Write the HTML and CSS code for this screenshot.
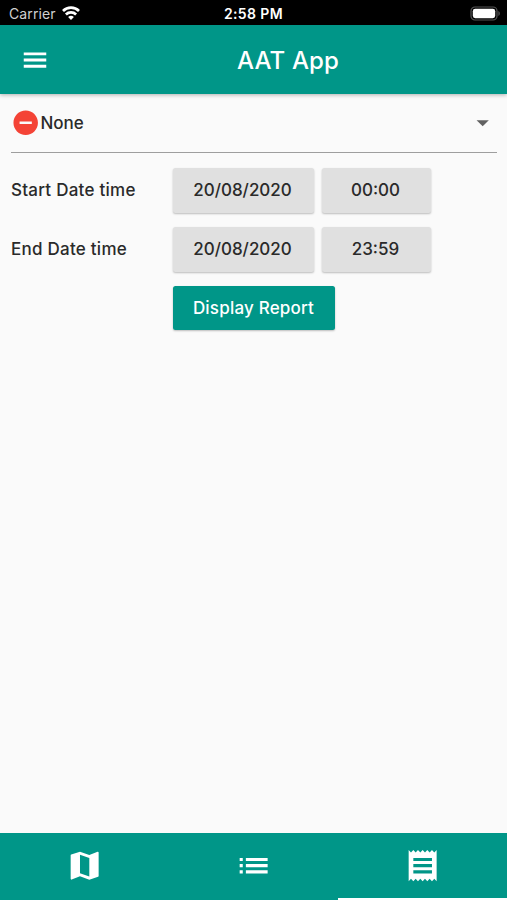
FILE: index.html
```
<!DOCTYPE html>
<html lang="en">
<head>
<meta charset="UTF-8">
<meta name="viewport" content="width=device-width, initial-scale=1.0">
<title>AAT App</title>
<link rel="stylesheet" href="styles.css">
</head>
<body>

<div class="status-bar">
  <div class="carrier">
    <span class="carrier-name">Carrier</span>
    <svg class="wifi" viewBox="0 0 18 14" fill="none" stroke="#fff" stroke-width="2.7">
      <path d="M1 5a11.4 11.4 0 0 1 16 0"/>
      <path d="M3.9 8.5a7.3 7.3 0 0 1 10.2 0"/>
      <path d="M9 14 6.1 11.1a4.1 4.1 0 0 1 5.8 0z" fill="#fff" stroke="none"/>
    </svg>
  </div>
  <div class="clock">2:58 PM</div>
  <svg class="battery" viewBox="0 0 31 15">
    <rect x="1" y="1" width="26" height="13" rx="4" fill="none" stroke="#555" stroke-width="1.2"/>
    <rect x="2.8" y="2.8" width="22.4" height="9.4" rx="2.4" fill="#fff"/>
    <path d="M28.4 5v5c1.9-.7 1.9-4.3 0-5z" fill="#555"/>
  </svg>
</div>

<div class="app-bar">
  <svg class="menu-icon" viewBox="0 0 24 24"><path d="M3 18.1h18v-2.3H3v2.3zm0-5h18v-2.3H3v2.3zm0-7.2v2.3h18V5.9H3z"/></svg>
  <h1 class="title">AAT App</h1>
</div>

<div class="content">
  <div class="dropdown">
    <svg class="none-icon" viewBox="0 0 24 24"><path d="M12 2C6.48 2 2 6.48 2 12s4.48 10 10 10 10-4.48 10-10S17.52 2 12 2zm5 11H7v-2h10v2z"/></svg>
    <span class="dropdown-text">None</span>
    <svg class="arrow-icon" viewBox="0 0 24 24"><path d="M7 10l5 5 5-5z"/></svg>
  </div>

  <div class="form-row">
    <div class="label">Start Date time</div>
    <button class="button date">20/08/2020</button>
    <button class="button time">00:00</button>
  </div>
  <div class="form-row">
    <div class="label">End Date time</div>
    <button class="button date">20/08/2020</button>
    <button class="button time">23:59</button>
  </div>
  <div class="form-row">
    <div class="label"></div>
    <button class="button display-button">Display Report</button>
  </div>
</div>

<div class="tab-bar">
  <div class="tab">
    <svg viewBox="0 0 24 24"><path d="M20.5 3l-.16.03L15 5.1 9 3 3.36 4.9c-.21.07-.36.25-.36.48V20.5c0 .28.22.5.5.5l.16-.03L9 18.9l6 2.1 5.64-1.9c.21-.07.36-.25.36-.48V3.5c0-.28-.22-.5-.5-.5zM15 19l-6-2.11V5l6 2.11V19z"/></svg>
  </div>
  <div class="tab">
    <svg viewBox="0 0 24 24"><path d="M3 13h2v-2H3v2zm0 4h2v-2H3v2zm0-8h2V7H3v2zm4 4h14v-2H7v2zm0 4h14v-2H7v2zM7 7v2h14V7H7z"/></svg>
  </div>
  <div class="tab active">
    <svg viewBox="0 0 24 24"><path d="M18 17H6v-2h12v2zm0-4H6v-2h12v2zm0-4H6V7h12v2zM3 22l1.5-1.5L6 22l1.5-1.5L9 22l1.5-1.5L12 22l1.5-1.5L15 22l1.5-1.5L18 22l1.5-1.5L21 22V2l-1.5 1.5L18 2l-1.5 1.5L15 2l-1.5 1.5L12 2l-1.5 1.5L9 2 7.5 3.5 6 2 4.5 3.5 3 2v20z"/></svg>
  </div>
</div>

</body>
</html>
```
FILE: styles.css
```
* {
  box-sizing: border-box;
}

body {
  margin: 0;
  height: 100vh;
  display: flex;
  flex-direction: column;
  overflow: hidden;
  background-color: #fafafa;
  font-family: Inter, "Liberation Sans", sans-serif;
  color: #2a2a2a;
}

.status-bar {
  display: grid;
  grid-template-columns: 1fr auto 1fr;
  align-items: center;
  height: 25px;
  padding: 2px 6px 0 6px;
  background-color: #000;
  color: #fff;
  font-size: 14px;
}

.carrier {
  display: flex;
  align-items: center;
  gap: 6px;
  padding-left: 3px;
}

.carrier-name {
  color: #d0d0d0;
  letter-spacing: 0.1px;
}

.wifi {
  width: 18px;
  height: 14px;
  margin-top: -2px;
}

.clock {
  font-size: 14px;
  font-weight: 600;
  letter-spacing: 0.4px;
}

.battery {
  width: 31px;
  height: 15px;
  margin-top: -1px;
  justify-self: end;
}

.app-bar {
  display: grid;
  grid-template-columns: 80px 1fr 80px;
  align-items: center;
  height: 69px;
  background-color: #009688;
  box-shadow: 0 1px 4px rgba(0, 0, 0, 0.3);
}

.menu-icon {
  width: 30px;
  height: 30px;
  margin-left: 20px;
  fill: #fff;
}

.title {
  margin: 0;
  padding: 1px 0 0 69px;
  text-align: center;
  font-size: 24px;
  font-weight: 500;
  letter-spacing: 0.1px;
  color: #fff;
}

.content {
  flex: 1;
  display: flex;
  flex-direction: column;
  gap: 14px;
  padding: 0 10px 0 11px;
}

.dropdown {
  display: flex;
  align-items: center;
  height: 59px;
  margin-bottom: 1px;
  border-bottom: 1px solid #9e9e9e;
}

.none-icon {
  width: 29.4px;
  height: 29.4px;
  fill: #f44336;
}

.dropdown-text {
  flex: 1;
  font-size: 17px;
  font-weight: 500;
}

.arrow-icon {
  width: 29.4px;
  height: 29.4px;
  fill: #616161;
}

.form-row {
  display: flex;
  align-items: center;
}

.label {
  width: 162px;
  padding-bottom: 2px;
  font-size: 17px;
  font-weight: 500;
  letter-spacing: 0.25px;
}

.button {
  height: 45px;
  margin-right: 8px;
  padding: 0 2px 2px 0;
  border: none;
  border-radius: 2.5px;
  background-color: #e0e0e0;
  box-shadow: 0 1px 2px rgba(0, 0, 0, 0.25);
  font-family: inherit;
  font-size: 17px;
  font-weight: 500;
  color: #2a2a2a;
}

.date {
  width: 141px;
}

.time {
  width: 109px;
}

.display-button {
  width: 162px;
  height: 44px;
  padding: 0 1px 0 0;
  background-color: #009688;
  letter-spacing: 0.2px;
  color: #fff;
}

.tab-bar {
  display: flex;
  height: 67px;
  background-color: #009688;
}

.tab {
  flex: 1;
  display: flex;
  align-items: center;
  justify-content: center;
  border-bottom: 2.5px solid transparent;
}

.tab.active {
  border-bottom-color: #fff;
}

.tab svg {
  width: 37.3px;
  height: 37.3px;
  fill: #fff;
}
```
